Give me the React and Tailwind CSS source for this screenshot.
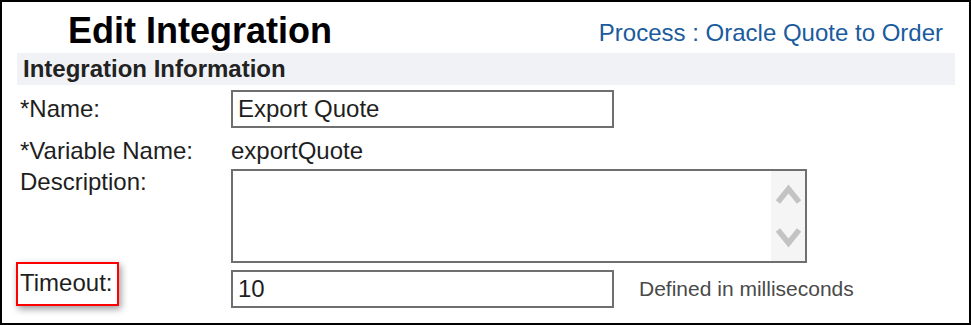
export default function App() {
  const font = { fontFamily: '"Liberation Sans", Arial, sans-serif' }
  return (
    <div className="w-[971px] h-[325px] bg-white" style={font}>
      <div className="w-[971px] h-[325px] border-2 border-black flex flex-col text-[#1e1e1e]">
        <div className="flex justify-between h-[51px]">
          <h1 className="pl-[66px] pt-[11px] text-[36px] leading-[36px] font-bold text-black">Edit Integration</h1>
          <div className="pr-[26px] pt-[17px] text-[24px] leading-[28px] text-[#1a5b9e]">Process : Oracle Quote to Order</div>
        </div>
        <div className="ml-[15px] mr-[14px] h-[32px] bg-[#f1f2f6] pl-[6px] pt-[2px] text-[24px] leading-[28px] font-bold text-[#222]">
          Integration Information
        </div>

        <div className="flex items-center h-[38px] mt-[5px] pl-[18px]">
          <div className="w-[211px] text-[24px] leading-[28px]">*Name:</div>
          <div className="w-[383px] h-[38px] border-2 border-[#6f6f6f] px-[5px] text-[24px] leading-[34px]">Export Quote</div>
        </div>

        <div className="flex h-[41px] pt-[9px] pl-[18px] text-[24px] leading-[28px]">
          <div className="w-[211px]">*Variable Name:</div>
          <div>exportQuote</div>
        </div>

        <div className="flex h-[94px] pl-[18px]">
          <div className="w-[211px] text-[24px] leading-[24px] pt-[1px]">Description:</div>
          <div className="w-[576px] h-[94px] border-2 border-[#6f6f6f] flex">
            <div className="flex-1" />
            <div className="w-[34px] bg-[#f5f5f5] flex flex-col items-center justify-between pt-[13px] pb-[13px]">
              <svg width="25" height="20" viewBox="0 0 25 20" fill="none" stroke="#c3c3c3" strokeWidth="5.5">
                <path d="M2 18 L12.5 5 L23 18" />
              </svg>
              <svg width="25" height="20" viewBox="0 0 25 20" fill="none" stroke="#c3c3c3" strokeWidth="5.5">
                <path d="M2 2 L12.5 15 L23 2" />
              </svg>
            </div>
          </div>
        </div>

        <div className="flex items-center h-[38px] mt-[7px] pl-[18px]">
          <div className="w-[211px]">
            <div className="w-[103px] h-[44px] -ml-[4px] -mt-[10px] border-2 border-[#ff0000] pl-[2px] pt-[5px] text-[24px] leading-[28px] shadow-[2px_3px_7px_rgba(0,0,0,0.4)]">
              Timeout:
            </div>
          </div>
          <div className="w-[383px] h-[38px] border-2 border-[#6f6f6f] px-[5px] text-[24px] leading-[34px]">10</div>
          <div className="ml-[25px] text-[21px] leading-[24px] text-[#4a4a4a]">Defined in milliseconds</div>
        </div>
      </div>
    </div>
  )
}
